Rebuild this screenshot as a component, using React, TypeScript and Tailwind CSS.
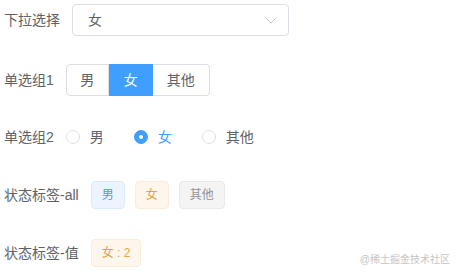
const FONT = {
  fontFamily: '"Liberation Sans", "Noto Sans CJK SC", sans-serif',
};

function Label({ text }: { text: string }) {
  return (
    <span className="mr-[12px] text-[14px] leading-none text-[#606266]">
      {text}
    </span>
  );
}

function Radio({ label, checked }: { label: string; checked?: boolean }) {
  return (
    <label className="mr-[30px] flex items-center">
      {checked ? (
        <span className="flex h-[14px] w-[14px] items-center justify-center rounded-full border border-[#409eff] bg-[#409eff]">
          <span className="h-[4px] w-[4px] rounded-full bg-white" />
        </span>
      ) : (
        <span className="h-[14px] w-[14px] rounded-full border border-[#dcdfe6] bg-white" />
      )}
      <span
        className={`pl-[10px] text-[14px] leading-none ${
          checked ? "text-[#409eff]" : "text-[#606266]"
        }`}
      >
        {label}
      </span>
    </label>
  );
}

const TAG_STYLES = {
  primary: "bg-[#ecf5ff] border-[#d9ecff] text-[#409eff]",
  warning: "bg-[#fdf6ec] border-[#faecd8] text-[#e6a23c]",
  info: "bg-[#f4f4f5] border-[#e9e9eb] text-[#909399]",
};

function Tag({
  text,
  type,
}: {
  text: string;
  type: keyof typeof TAG_STYLES;
}) {
  return (
    <span
      className={`flex h-[28px] items-center rounded-[4px] border px-[10px] text-[12px] whitespace-pre ${TAG_STYLES[type]}`}
    >
      {text}
    </span>
  );
}

export default function App() {
  return (
    <div className="relative h-[272px] w-[458px] bg-white pl-[4px]" style={FONT}>
      {/* 下拉选择 */}
      <div className="mt-[4px] flex h-[32px] items-center">
        <Label text="下拉选择" />
        <div className="flex h-[32px] w-[217px] items-center justify-between rounded-[4px] border border-[#dcdfe6] pl-[15px] pr-[11px]">
          <span className="text-[14px] text-[#606266]">女</span>
          <svg width="12" height="7" viewBox="0 0 12 7" fill="none">
            <polyline
              points="0.5,0.5 6,6 11.5,0.5"
              stroke="#c0c4cc"
              strokeWidth="1"
            />
          </svg>
        </div>
      </div>

      {/* 单选组1 */}
      <div className="mt-[28px] flex h-[32px] items-center">
        <Label text="单选组1" />
        <div className="flex h-[32px] text-[14px]">
          <span className="flex w-[43px] items-center justify-center rounded-l-[4px] border border-[#dcdfe6] text-[#606266]">
            男
          </span>
          <span className="flex w-[44px] items-center justify-center border border-[#409eff] bg-[#409eff] text-white">
            女
          </span>
          <span className="flex w-[57px] items-center justify-center rounded-r-[4px] border border-l-0 border-[#dcdfe6] text-[#606266]">
            其他
          </span>
        </div>
      </div>

      {/* 单选组2 */}
      <div className="mt-[25px] flex h-[32px] items-center">
        <Label text="单选组2" />
        <Radio label="男" />
        <Radio label="女" checked />
        <Radio label="其他" />
      </div>

      {/* 状态标签-all */}
      <div className="mt-[26px] flex h-[32px] items-center">
        <Label text="状态标签-all" />
        <div className="flex gap-[10px]">
          <Tag text="男" type="primary" />
          <Tag text="女" type="warning" />
          <Tag text="其他" type="info" />
        </div>
      </div>

      {/* 状态标签-值 */}
      <div className="mt-[26px] flex h-[32px] items-center">
        <Label text="状态标签-值" />
        <Tag text="女 : 2" type="warning" />
      </div>

      <span className="absolute right-[8px] bottom-[9px] text-[10px] text-[#c6c6c6]">
        @稀土掘金技术社区
      </span>
    </div>
  );
}
